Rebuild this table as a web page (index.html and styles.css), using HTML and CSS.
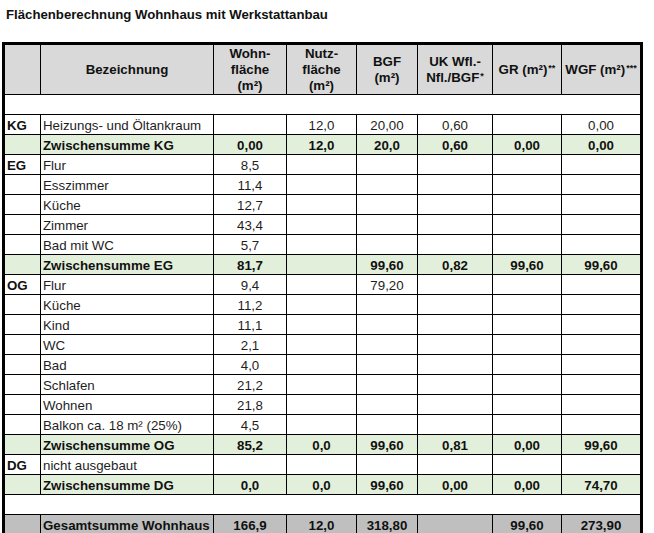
FILE: index.html
```html
<!DOCTYPE html>
<html lang="de">
<head>
<meta charset="utf-8">
<title>Flächenberechnung</title>
<link rel="stylesheet" href="styles.css">
</head>
<body>
<h1 class="title">Flächenberechnung Wohnhaus mit Werkstattanbau</h1>
<div class="sheet">
  <div class="row head">
    <div class="c"></div>
    <div class="c"><span>Bezeichnung</span></div>
    <div class="c"><span>Wohn-<br>fläche<br>(m²)</span></div>
    <div class="c"><span>Nutz-<br>fläche<br>(m²)</span></div>
    <div class="c"><span>BGF<br>(m²)</span></div>
    <div class="c"><span>UK Wfl.-<br>Nfl./BGF<sup class="ast">*</sup></span></div>
    <div class="c"><span>GR (m²)<sup class="ast">**</sup></span></div>
    <div class="c"><span>WGF (m²)<sup class="ast">***</sup></span></div>
  </div>
  <div class="blank"></div>

  <div class="row"><div class="c lvl">KG</div><div class="c txt">Heizungs- und Öltankraum</div><div class="c"></div><div class="c">12,0</div><div class="c">20,00</div><div class="c">0,60</div><div class="c"></div><div class="c">0,00</div></div>
  <div class="row sum"><div class="c"></div><div class="c txt">Zwischensumme KG</div><div class="c">0,00</div><div class="c">12,0</div><div class="c">20,0</div><div class="c">0,60</div><div class="c">0,00</div><div class="c">0,00</div></div>

  <div class="row"><div class="c lvl">EG</div><div class="c txt">Flur</div><div class="c">8,5</div><div class="c"></div><div class="c"></div><div class="c"></div><div class="c"></div><div class="c"></div></div>
  <div class="row"><div class="c"></div><div class="c txt">Esszimmer</div><div class="c">11,4</div><div class="c"></div><div class="c"></div><div class="c"></div><div class="c"></div><div class="c"></div></div>
  <div class="row"><div class="c"></div><div class="c txt">Küche</div><div class="c">12,7</div><div class="c"></div><div class="c"></div><div class="c"></div><div class="c"></div><div class="c"></div></div>
  <div class="row"><div class="c"></div><div class="c txt">Zimmer</div><div class="c">43,4</div><div class="c"></div><div class="c"></div><div class="c"></div><div class="c"></div><div class="c"></div></div>
  <div class="row"><div class="c"></div><div class="c txt">Bad mit WC</div><div class="c">5,7</div><div class="c"></div><div class="c"></div><div class="c"></div><div class="c"></div><div class="c"></div></div>
  <div class="row sum"><div class="c"></div><div class="c txt">Zwischensumme EG</div><div class="c">81,7</div><div class="c"></div><div class="c">99,60</div><div class="c">0,82</div><div class="c">99,60</div><div class="c">99,60</div></div>

  <div class="row"><div class="c lvl">OG</div><div class="c txt">Flur</div><div class="c">9,4</div><div class="c"></div><div class="c">79,20</div><div class="c"></div><div class="c"></div><div class="c"></div></div>
  <div class="row"><div class="c"></div><div class="c txt">Küche</div><div class="c">11,2</div><div class="c"></div><div class="c"></div><div class="c"></div><div class="c"></div><div class="c"></div></div>
  <div class="row"><div class="c"></div><div class="c txt">Kind</div><div class="c">11,1</div><div class="c"></div><div class="c"></div><div class="c"></div><div class="c"></div><div class="c"></div></div>
  <div class="row"><div class="c"></div><div class="c txt">WC</div><div class="c">2,1</div><div class="c"></div><div class="c"></div><div class="c"></div><div class="c"></div><div class="c"></div></div>
  <div class="row"><div class="c"></div><div class="c txt">Bad</div><div class="c">4,0</div><div class="c"></div><div class="c"></div><div class="c"></div><div class="c"></div><div class="c"></div></div>
  <div class="row"><div class="c"></div><div class="c txt">Schlafen</div><div class="c">21,2</div><div class="c"></div><div class="c"></div><div class="c"></div><div class="c"></div><div class="c"></div></div>
  <div class="row"><div class="c"></div><div class="c txt">Wohnen</div><div class="c">21,8</div><div class="c"></div><div class="c"></div><div class="c"></div><div class="c"></div><div class="c"></div></div>
  <div class="row"><div class="c"></div><div class="c txt">Balkon ca. 18 m² (25%)</div><div class="c">4,5</div><div class="c"></div><div class="c"></div><div class="c"></div><div class="c"></div><div class="c"></div></div>
  <div class="row sum"><div class="c"></div><div class="c txt">Zwischensumme OG</div><div class="c">85,2</div><div class="c">0,0</div><div class="c">99,60</div><div class="c">0,81</div><div class="c">0,00</div><div class="c">99,60</div></div>

  <div class="row"><div class="c lvl">DG</div><div class="c txt">nicht ausgebaut</div><div class="c"></div><div class="c"></div><div class="c"></div><div class="c"></div><div class="c"></div><div class="c"></div></div>
  <div class="row sum"><div class="c"></div><div class="c txt">Zwischensumme DG</div><div class="c">0,0</div><div class="c">0,0</div><div class="c">99,60</div><div class="c">0,00</div><div class="c">0,00</div><div class="c">74,70</div></div>
  <div class="blank"></div>

  <div class="row total"><div class="c"></div><div class="c txt">Gesamtsumme Wohnhaus</div><div class="c">166,9</div><div class="c">12,0</div><div class="c">318,80</div><div class="c"></div><div class="c">99,60</div><div class="c">273,90</div></div>
</div>
</body>
</html>
```
FILE: styles.css
```css
html, body {
  margin: 0;
  padding: 0;
  background: #ffffff;
}

body {
  font-family: "Liberation Sans", Arial, sans-serif;
  color: #1e1e1e;
}

.title {
  margin: 7px 0 20px 6px;
  font-size: 13.2px;
  line-height: 15px;
  font-weight: bold;
  color: #111;
}

.sheet {
  margin-left: 2px;
  width: 635px;
  border: 3px solid #000;
  border-bottom: 0;
  font-size: 13.3px;
}

.row {
  display: grid;
  grid-template-columns: 36px 173px 73px 70px 61px 75px 69px 78px;
  height: 20px;
}

.c {
  box-sizing: border-box;
  border-right: 1px solid #000;
  border-bottom: 1px solid #000;
  text-align: center;
  line-height: 19px;
  padding-top: 1px;
  white-space: nowrap;
  overflow: hidden;
}

.row > .c:last-child {
  border-right: 0;
}

.c.txt,
.c.lvl {
  text-align: left;
  padding-left: 2px;
}

.c.lvl {
  font-weight: bold;
  color: #111;
}

.blank {
  height: 20px;
  box-sizing: border-box;
  border-bottom: 1px solid #000;
}

.head {
  height: 50px;
  background: #d9d9d9;
}

.head .c {
  display: flex;
  align-items: center;
  justify-content: center;
  font-weight: bold;
  line-height: 16px;
  color: #111;
  padding-top: 1px;
}

.ast {
  font-size: 9px;
  vertical-align: 3px;
  line-height: 0;
  margin-left: 1px;
}

.sum {
  background: #e2efda;
  font-weight: bold;
  color: #111;
}

.total {
  background: #bfbfbf;
  font-weight: bold;
  color: #111;
}
```
